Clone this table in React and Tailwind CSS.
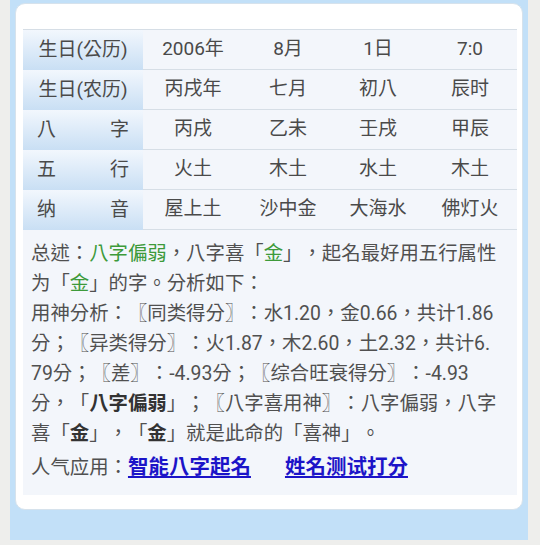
import React from "react";

const rows = [
  { label: ["生日(公历)"], cells: ["2006年", "8月", "1日", "7:0"] },
  { label: ["生日(农历)"], cells: ["丙戌年", "七月", "初八", "辰时"] },
  { label: ["八", "字"], cells: ["丙戌", "乙未", "壬戌", "甲辰"] },
  { label: ["五", "行"], cells: ["火土", "木土", "水土", "木土"] },
  { label: ["纳", "音"], cells: ["屋上土", "沙中金", "大海水", "佛灯火"] },
];

const widths = ["w-[100px]", "w-[90px]", "w-[90px]", "w-[94px]"];

const Green = ({ children }) => <span className="text-[#3d9a3a]">{children}</span>;
const Bold = ({ children }) => <b className="font-bold text-[#333]">{children}</b>;

const App = () => {
  return (
    <div
      className="min-h-[545px] bg-[#eeeeec] pl-[10px] pb-[5px] [text-spacing-trim:space-all]"
      style={{ fontFamily: 'Roboto, "Noto Sans CJK TC", "Noto Sans CJK SC", sans-serif' }}
    >
      <div className="w-[518px] bg-[#c2e0f8] pt-[3px] pl-[5px] pr-[5px] pb-[30px]">

        <div className="rounded-[10px] bg-white border border-[#d6e2ec] pt-[25px] pl-[7px] pr-[5px] pb-[14px]">

          <div className="w-[494px] border-t border-[#d6dee6]">
            {rows.map((row, i) => (
              <div key={i} className="flex h-[40px] text-[19px] text-[#4a4a4a]">

                <div className={"w-[120px] bg-linear-to-b from-[#f2f7fd] to-[#c9dff4] flex items-center px-[14px] " + (row.label.length > 1 ? "justify-between" : "justify-center")}>
                  {row.label.map((t) => <span key={t}>{t}</span>)}
                </div>

                {row.cells.map((c, j) => (
                  <div key={j} className={widths[j] + " bg-[#f3f6fb] border-b border-[#d6dee6] flex items-center justify-center"}>
                    {c}
                  </div>
                ))}

              </div>
            ))}
          </div>

          <div className="w-[494px] bg-[#f3f6fb] pt-[9px] pb-[12px] px-[8px] text-[19.4px] leading-[30px] text-[#505050] whitespace-nowrap">

            <p>
              总述：<Green>八字偏弱</Green>，八字喜「<Green>金</Green>」，起名最好用五行属性<br />
              为「<Green>金</Green>」的字。分析如下：
            </p>

            {/* wrapped as in the original page */}
            <p>
              用神分析：〖同类得分〗：水1.20，金0.66，共计1.86<br />
              分；〖异类得分〗：火1.87，木2.60，土2.32，共计6.<br />
              79分；〖差〗：-4.93分；〖综合旺衰得分〗：-4.93<br />
              分，「<Bold>八字偏弱</Bold>」；〖八字喜用神〗：八字偏弱，八字<br />
              喜「<Bold>金</Bold>」，「<Bold>金</Bold>」就是此命的「喜神」。
            </p>

            <p className="mt-[3px]">
              人气应用：
              <a href="#" className="text-[20.5px] font-bold text-[#1c14c8] underline mr-[34px]">智能八字起名</a>
              <a href="#" className="text-[20.5px] font-bold text-[#1c14c8] underline">姓名测试打分</a>
            </p>

          </div>

        </div>

      </div>
    </div>
  );
};

export default App;
